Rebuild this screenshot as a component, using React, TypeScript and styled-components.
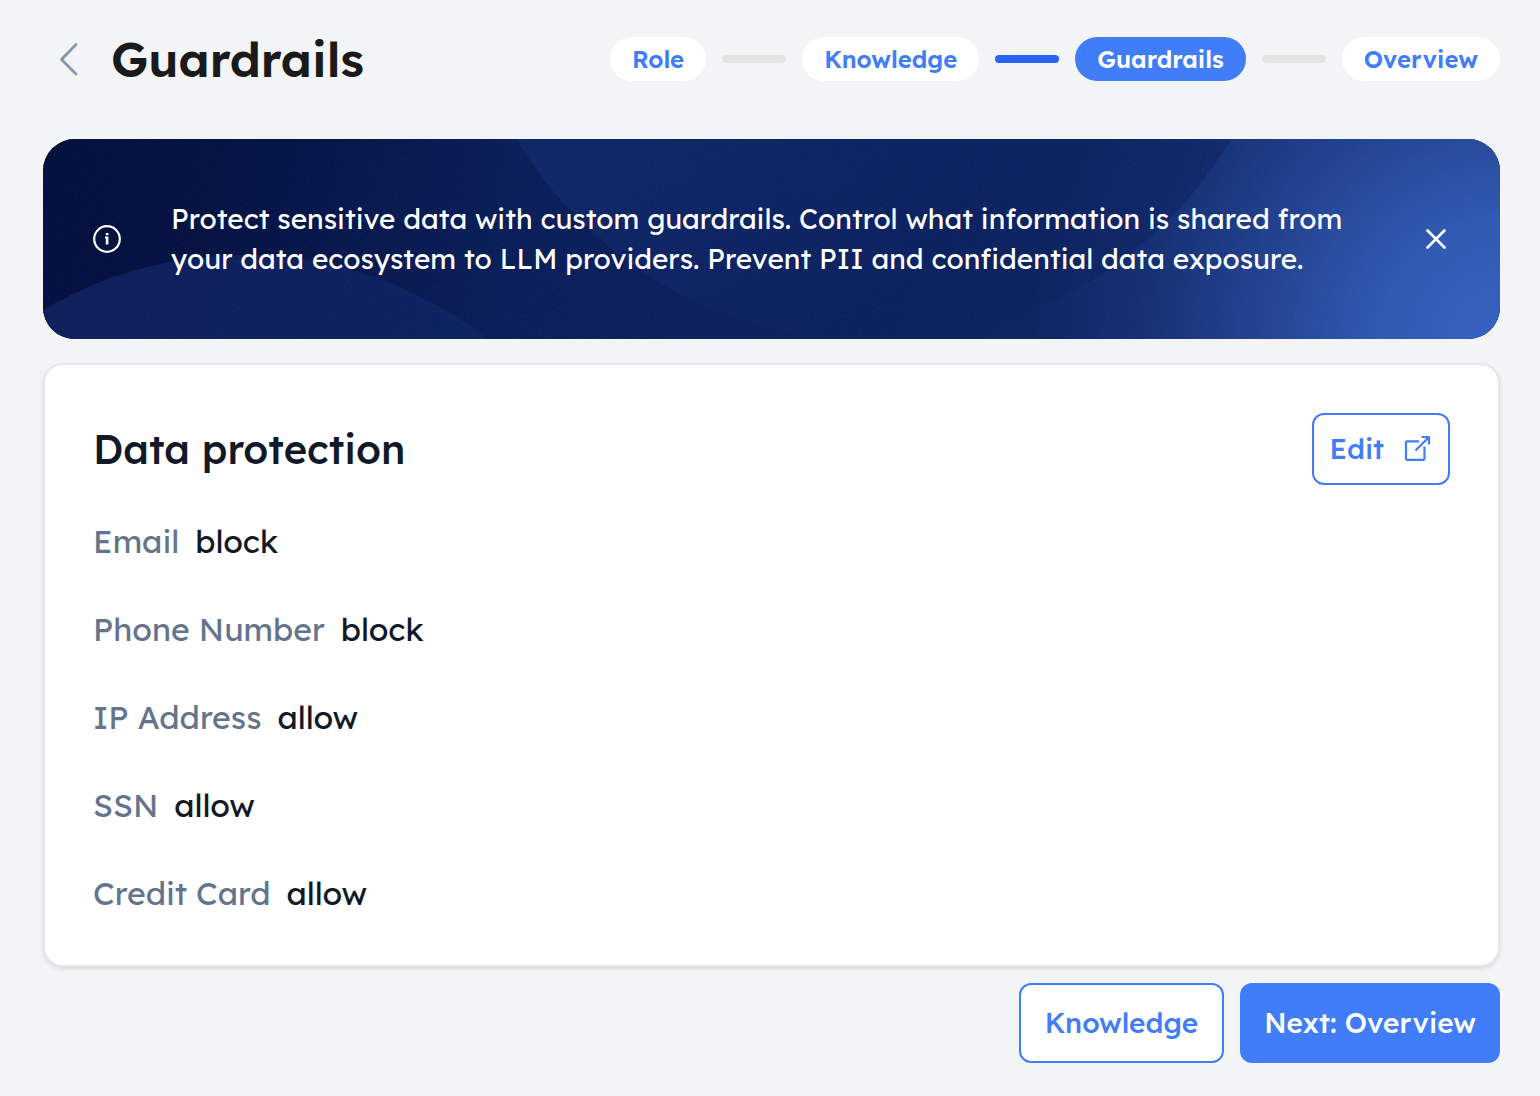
import React from 'react';
import styled, { createGlobalStyle } from 'styled-components';

const blue = '#417df8';

const GlobalStyle = createGlobalStyle`
  *, *::before, *::after { box-sizing: border-box; }
  body {
    margin: 0;
    background: #f3f4f6;
    color: #111827;
    font-family: Lexend, Inter, "Liberation Sans", sans-serif;
  }
  button { font-family: inherit; cursor: pointer; }
`;

const Page = styled.div`
  display: flex;
  flex-direction: column;
  padding: 29px 40px 32px 43px;
`;

const Header = styled.header`
  display: flex;
  align-items: center;
  justify-content: space-between;
  gap: 24px;
  margin-bottom: 50px;
`;

const TitleGroup = styled.div`
  display: flex;
  align-items: center;
  gap: 16px;
`;

const IconButton = styled.button<{ $color: string }>`
  display: flex;
  align-items: center;
  justify-content: center;
  flex: none;
  width: 52px;
  height: 52px;
  padding: 0;
  border: 0;
  background: none;
  color: ${(p) => p.$color};
`;

const Title = styled.h1`
  margin: 0;
  color: #1a1a1a;
  font-size: 48px;
  font-weight: 600;
  line-height: 60px;
`;

const Steps = styled.ol`
  display: flex;
  align-items: center;
  gap: 16px;
  margin: 0;
  padding: 0;
  list-style: none;
`;

const Step = styled.a<{ $active: boolean }>`
  display: block;
  padding: 0 22px;
  border-radius: 22px;
  background: ${(p) => (p.$active ? blue : '#fff')};
  color: ${(p) => (p.$active ? '#fff' : blue)};
  font-size: 24px;
  font-weight: 600;
  line-height: 44px;
  text-decoration: none;
`;

const Connector = styled.li<{ $reached: boolean }>`
  width: 64px;
  height: 8px;
  border-radius: 4px;
  background: ${(p) => (p.$reached ? '#2962f6' : '#e4e4e4')};
`;

const Banner = styled.section`
  position: relative;
  display: flex;
  align-items: center;
  min-height: 200px;
  padding: 32px 38px 32px 50px;
  border-radius: 32px;
  overflow: hidden;
  background: #0c2160;
  color: #fff;
  margin-bottom: 24px;
`;

const Art = styled.svg`
  position: absolute;
  inset: 0;
  width: 100%;
  height: 100%;
`;

const BannerContent = styled.div`
  position: relative;
  display: flex;
  flex: 1;
  align-items: center;
  gap: 50px;
`;

const BannerText = styled.p`
  flex: 1;
  margin: 0;
  font-size: 28px;
  font-weight: 400;
  line-height: 40px;
`;

const Card = styled.section`
  display: flex;
  flex-direction: column;
  gap: 32px;
  padding: 48px;
  border: 2px solid #e5e7eb;
  border-radius: 20px;
  background: #fff;
  box-shadow: 0 2px 4px rgba(0, 0, 0, 0.1);
  margin-bottom: 16px;
`;

const CardHeader = styled.div`
  display: flex;
  align-items: center;
  justify-content: space-between;
`;

const CardTitle = styled.h2`
  margin: 0;
  font-size: 40px;
  font-weight: 500;
  line-height: 56px;
`;

const Button = styled.button<{ $primary?: boolean; $compact?: boolean }>`
  display: flex;
  align-items: center;
  justify-content: center;
  gap: 20px;
  height: ${(p) => (p.$compact ? 72 : 80)}px;
  padding: 0 ${(p) => (p.$compact ? 16 : 24)}px;
  border: ${(p) => (p.$primary ? '0' : `2px solid ${blue}`)};
  border-radius: 12px;
  background: ${(p) => (p.$primary ? blue : '#fff')};
  color: ${(p) => (p.$primary ? '#fff' : blue)};
  font-size: 28px;
  font-weight: 500;
  line-height: 40px;
  white-space: nowrap;
`;

const Rules = styled.dl`
  display: flex;
  flex-direction: column;
  gap: 40px;
  margin: 0;
`;

const Rule = styled.div`
  display: flex;
  gap: 16px;
  font-size: 32px;
  line-height: 48px;
`;

const RuleName = styled.dt`
  color: #64748b;
`;

const RuleValue = styled.dd`
  margin: 0;
`;

const Footer = styled.footer`
  display: flex;
  justify-content: flex-end;
  gap: 16px;
`;

const steps = [
  { label: 'Role', reached: false },
  { label: 'Knowledge', reached: false },
  { label: 'Guardrails', reached: true },
  { label: 'Overview', reached: false },
];

const rules = [
  ['Email', 'block'],
  ['Phone Number', 'block'],
  ['IP Address', 'allow'],
  ['SSN', 'allow'],
  ['Credit Card', 'allow'],
];

function BannerArt() {
  return (
    <Art viewBox="0 0 1457 200" preserveAspectRatio="xMaxYMid slice" aria-hidden="true">
      <defs>
        <linearGradient id="base" x1="0" y1="0" x2="1457" y2="240" gradientUnits="userSpaceOnUse">
          <stop offset="0" stopColor="#030f3c" />
          <stop offset="0.12" stopColor="#041242" />
          <stop offset="0.32" stopColor="#091d58" />
          <stop offset="0.6" stopColor="#0b2160" />
          <stop offset="1" stopColor="#122b6c" />
        </linearGradient>
        <radialGradient id="glow" cx="1457" cy="200" r="470" gradientUnits="userSpaceOnUse">
          <stop offset="0" stopColor="#3662c2" />
          <stop offset="0.25" stopColor="#345fbc" stopOpacity="0.88" />
          <stop offset="0.5" stopColor="#345fbc" stopOpacity="0.5" />
          <stop offset="0.75" stopColor="#345fbc" stopOpacity="0.18" />
          <stop offset="1" stopColor="#345fbc" stopOpacity="0" />
        </radialGradient>
        <linearGradient id="large" x1="560" y1="0" x2="760" y2="240" gradientUnits="userSpaceOnUse">
          <stop offset="0" stopColor="#10276a" />
          <stop offset="0.6" stopColor="#0d2465" stopOpacity="0.8" />
          <stop offset="1" stopColor="#0b2160" stopOpacity="0.6" />
        </linearGradient>
        <linearGradient id="small" x1="60" y1="120" x2="440" y2="200" gradientUnits="userSpaceOnUse">
          <stop offset="0" stopColor="#0d1e5c" />
          <stop offset="1" stopColor="#0b2161" />
        </linearGradient>
        <filter id="grain" x="0" y="0" width="100%" height="100%">
          <feTurbulence type="fractalNoise" baseFrequency="0.8" numOctaves="2" />
          <feColorMatrix values="0 0 0 0 0.6  0 0 0 0 0.6  0 0 0 0 0.6  0.6 0 0 0 -0.2" />
        </filter>
      </defs>
      <rect width="1457" height="200" fill="url(#base)" />
      <rect width="1457" height="200" fill="url(#glow)" />
      <circle cx="831" cy="-213" r="416" fill="url(#large)" fillOpacity="0.85" />
      <circle cx="201" cy="511" r="395" fill="url(#small)" />
      <rect width="1457" height="200" filter="url(#grain)" opacity="0.15" />
    </Art>
  );
}

export default function App() {
  return (
    <>
      <GlobalStyle />
      <Page>
        <Header>
          <TitleGroup>
            <IconButton $color="#8896ae" type="button" aria-label="Back">
              <svg width="20" height="34" viewBox="0 0 20 34" fill="none" stroke="currentColor" strokeWidth="2.8" strokeLinecap="round" strokeLinejoin="round">
                <path d="M17 2.5 2.5 17.5 17 32" />
              </svg>
            </IconButton>
            <Title>Guardrails</Title>
          </TitleGroup>
          <nav aria-label="Progress">
            <Steps>
              {steps.map((step, i) => (
                <React.Fragment key={step.label}>
                  {i > 0 && <Connector $reached={step.reached} aria-hidden="true" />}
                  <li>
                    <Step href="#" $active={step.reached} aria-current={step.reached ? 'step' : undefined}>
                      {step.label}
                    </Step>
                  </li>
                </React.Fragment>
              ))}
            </Steps>
          </nav>
        </Header>
        <Banner>
          <BannerArt />
          <BannerContent>
            <svg width="28" height="28" viewBox="0 0 28 28" fill="none" aria-hidden="true">
              <circle cx="14" cy="14" r="12.8" stroke="#fff" strokeWidth="2.2" />
              <rect x="12.8" y="8" width="2.6" height="2.2" fill="#fff" />
              <path d="M12 11.5h3.4v8h-2.6V13.4H12z" fill="#fff" />
            </svg>
            <BannerText>
              Protect sensitive data with custom guardrails. Control what information is shared from your data
              ecosystem to LLM providers. Prevent PII and confidential data exposure.
            </BannerText>
            <IconButton $color="#fff" type="button" aria-label="Dismiss">
              <svg width="20" height="20" viewBox="0 0 20 20" fill="none" stroke="currentColor" strokeWidth="2.6" strokeLinecap="round">
                <path d="M1.5 1.5 18.5 18.5M18.5 1.5 1.5 18.5" />
              </svg>
            </IconButton>
          </BannerContent>
        </Banner>
        <Card>
          <CardHeader>
            <CardTitle>Data protection</CardTitle>
            <Button $compact type="button">
              Edit
              <svg width="28" height="28" viewBox="0 0 28 28" fill="none" stroke="currentColor" strokeWidth="2.2" strokeLinejoin="round" aria-hidden="true">
                <path d="M15 6.3H3a1 1 0 0 0-1 1v16.500a1 1 0 0 0 1 1h16.500a1 1 0 0 0 1-1V11.500" />
                <path d="M11.500 15.500 24.500 2.500M17.500 2H25V9.500" />
              </svg>
            </Button>
          </CardHeader>
          <Rules>
            {rules.map(([name, value]) => (
              <Rule key={name}>
                <RuleName>{name}</RuleName>
                <RuleValue>{value}</RuleValue>
              </Rule>
            ))}
          </Rules>
        </Card>
        <Footer>
          <Button type="button">Knowledge</Button>
          <Button $primary type="button">Next: Overview</Button>
        </Footer>
      </Page>
    </>
  );
}
